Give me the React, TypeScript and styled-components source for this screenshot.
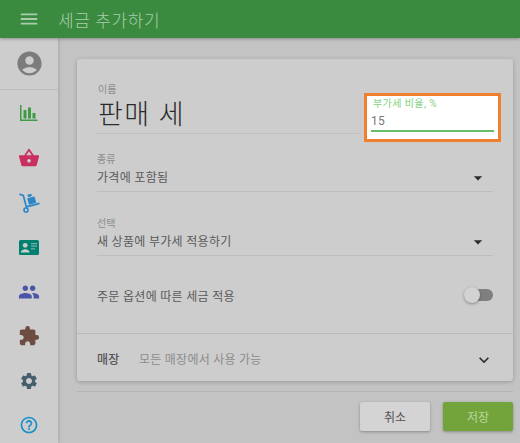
import React from "react";
import styled, { createGlobalStyle } from "styled-components";
import {
  MdMenu,
  MdAccountCircle,
  MdShoppingBasket,
  MdPeople,
  MdExtension,
  MdSettings,
  MdHelpOutline,
  MdExpandMore,
  MdArrowDropDown,
} from "react-icons/md";

const Global = createGlobalStyle`
  html, body { margin: 0; padding: 0; background: #c3c3c3; }
  * { box-sizing: border-box; }
  body { font-family: Roboto, "Noto Sans CJK KR", sans-serif; overflow: hidden; }
`;

const Page = styled.div`
  position: relative;
  width: 520px;
  height: 443px;
  overflow: hidden;
  display: flex;
  flex-direction: column;
  background: #c3c3c3;
`;

const Header = styled.header`
  height: 38px;
  flex: none;
  background: #3a8a40;
  display: flex;
  align-items: center;
  padding-left: 18px;
  gap: 18px;
  color: #a9cdab;
  box-shadow: 0 1px 3px rgba(0, 0, 0, 0.3);
  position: relative;
  z-index: 2;
`;

const Title = styled.h1`
  margin: 0;
  font-size: 17px;
  font-weight: 300;
  letter-spacing: 0.6px;
  color: #a9cdab;
`;

const Body = styled.div`
  flex: 1;
  display: flex;
  min-height: 0;
`;

const Sidebar = styled.nav`
  width: 58px;
  flex: none;
  background: #cdcdcd;
  box-shadow: 1px 0 3px rgba(0, 0, 0, 0.15);
  display: flex;
  flex-direction: column;
`;

const Profile = styled.div`
  height: 52px;
  flex: none;
  display: flex;
  align-items: center;
  justify-content: center;
  border-bottom: 1px solid #bcbcbc;
  color: #7c7c7c;
`;

const NavList = styled.div`
  display: flex;
  flex-direction: column;
  align-items: center;
  padding-top: 1px;
`;

const NavItem = styled.div<{ $color: string }>`
  height: 44.6px;
  flex: none;
  width: 100%;
  display: flex;
  align-items: center;
  justify-content: center;
  color: ${(p) => p.$color};
`;

const Main = styled.main`
  flex: 1;
  min-width: 0;
  padding: 21px 7px 0 19px;
  display: flex;
  flex-direction: column;
`;

const Card = styled.section`
  height: 322px;
  flex: none;
  background: #cdcdcd;
  border-radius: 3px;
  box-shadow: 0 1px 4px rgba(0, 0, 0, 0.22);
  display: flex;
  flex-direction: column;
`;

const Form = styled.div`
  flex: 1;
  padding: 0 20px;
  display: flex;
  flex-direction: column;
`;

const NameRow = styled.div`
  height: 75px;
  flex: none;
  padding-top: 25px;
  width: 263px;
  border-bottom: 1px solid #bfbfbf;
  margin-left: -1px;
  padding-left: 2px;
`;

const SmallLabel = styled.div`
  font-size: 10px;
  line-height: 12px;
  color: #8c8c8c;
`;

const NameValue = styled.div`
  font-size: 27px;
  font-weight: 300;
  line-height: 30px;
  letter-spacing: 1.5px;
  color: #2a2a2a;
  margin-top: 4px;
`;

const SelectField = styled.div<{ $top: number }>`
  margin-top: ${(p) => p.$top}px;
  height: 38px;
  flex: none;
  border-bottom: 1px solid #bdbdbd;
`;

const SelectValue = styled.div`
  font-size: 12px;
  line-height: 16px;
  margin-top: 2px;
  letter-spacing: 0.3px;
  color: #5a5a5a;
  display: flex;
  justify-content: space-between;
  align-items: center;
`;

const Caret = styled.span`
  display: flex;
  color: #2b2b2b;
  margin-right: 5px;
`;

const ToggleRow = styled.div`
  margin-top: 23px;
  height: 32px;
  display: flex;
  align-items: center;
  justify-content: space-between;
  font-size: 12px;
  letter-spacing: 0.3px;
  color: #5a5a5a;
`;

const Toggle = styled.div`
  width: 28px;
  height: 12px;
  border-radius: 6px;
  background: #7f7f7f;
  position: relative;
`;

const Knob = styled.div`
  position: absolute;
  left: -1px;
  top: -2px;
  width: 16px;
  height: 16px;
  border-radius: 50%;
  background: #d2d2d2;
  box-shadow: 0 1px 3px rgba(0, 0, 0, 0.35);
`;

const StoreRow = styled.div`
  height: 48px;
  flex: none;
  border-top: 1px solid #b9b9b9;
  padding: 2px 19px 0 20px;
  display: flex;
  align-items: center;
  font-size: 12px;
  letter-spacing: 0.25px;
`;

const StoreLabel = styled.span`
  color: #555;
  font-weight: 500;
  width: 42px;
  flex: none;
`;

const StoreValue = styled.span`
  color: #8c8c8c;
  flex: 1;
`;

const Chevron = styled.span`
  display: flex;
  color: #2b2b2b;
  margin-top: 2px;
`;

const Rule = styled.div`
  height: 1px;
  flex: none;
  margin-top: 10px;
  background: #b4b4b4;
`;

const Actions = styled.div`
  margin-top: 10px;
  display: flex;
  justify-content: flex-end;
  gap: 13px;
`;

const Button = styled.button<{ $primary?: boolean }>`
  width: 70px;
  height: 29px;
  border: 0;
  border-radius: 2px;
  padding: 0;
  font-family: inherit;
  font-size: 12px;
  background: ${(p) => (p.$primary ? "#73a43c" : "#d4d4d4")};
  color: ${(p) => (p.$primary ? "#bcd79d" : "#555")};
  box-shadow: 0 1px 3px rgba(0, 0, 0, 0.3);
`;

const Highlight = styled.div`
  position: absolute;
  left: 364px;
  top: 93px;
  width: 137px;
  height: 49px;
  background: #fff;
  border: 3px solid #f08030;
  padding: 2px 4px 0 4px;
`;

const HighlightLabel = styled.div`
  font-size: 10px;
  line-height: 12px;
  padding-left: 2px;
  letter-spacing: 0.4px;
  color: #84d184;
`;

const HighlightValue = styled.div`
  font-size: 12px;
  line-height: 14px;
  margin-top: 4px;
  height: 18px;
  color: #777;
  border-bottom: 2px solid #68bd68;
  letter-spacing: 0.3px;
`;

const BarsIcon = () => (
  <svg width="18" height="18" viewBox="0 0 18 18" fill="currentColor">
    <path d="M0 1h1.5v14.5H17.5V17H0z" />
    <path d="M3.5 6h3v8.5h-3zM8 3.5h3v11H8zM12.5 9h3v5.5h-3z" />
  </svg>
);

const DollyIcon = () => (
  <svg width="21" height="21" viewBox="0 0 24 24" fill="currentColor">
    <path d="M.5 1.5l5.2 1.6 3.3 12.7 14.2-3.7.5 1.9-16 4.2L4.1 4.7.5 3.6z" />
    <circle cx="8" cy="20.6" r="2.3" fill="none" stroke="currentColor" strokeWidth="1.8" />
    <path d="M9.4 7.2l8.2-2.2 2.2 7.4-8.4 2.2z" />
    <path d="M9.6 3.1l4.4-1.2 .8 2.8-4.4 1.2z" />
  </svg>
);

const ContactIcon = () => (
  <svg width="20" height="15" viewBox="0 0 20 15">
    <rect width="20" height="15" rx="1.5" fill="currentColor" />
    <circle cx="6.2" cy="5.3" r="2.4" fill="#cdcdcd" />
    <path d="M1.8 12.6c0-2.2 2.9-3.3 4.4-3.3s4.4 1.1 4.4 3.3z" fill="#cdcdcd" />
    <path d="M12 3h6v1.2h-6zM12 5.6h6v1.2h-6zM12 8.2h4v1.2h-4z" fill="#cdcdcd" opacity="0.6" />
  </svg>
);

const items = [
  { color: "#3f9c45", node: <BarsIcon /> },
  { color: "#c9305f", node: <MdShoppingBasket size={22} /> },
  { color: "#2a86c8", node: <DollyIcon /> },
  { color: "#00806e", node: <ContactIcon /> },
  { color: "#4a55a8", node: <MdPeople size={22} /> },
  { color: "#6d4c41", node: <MdExtension size={22} /> },
  { color: "#455f6d", node: <MdSettings size={20} /> },
  { color: "#1590cc", node: <MdHelpOutline size={20} /> },
];

export default function App() {
  return (
    <Page>
      <Global />
      <Header>
        <MdMenu size={22} />
        <Title>세금 추가하기</Title>
      </Header>
      <Body>
        <Sidebar>
          <Profile>
            <MdAccountCircle size={29} />
          </Profile>
          <NavList>
            {items.map((it, i) => (
              <NavItem key={i} $color={it.color}>
                {it.node}
              </NavItem>
            ))}
          </NavList>
        </Sidebar>
        <Main>
          <Card>
            <Form>
              <NameRow>
                <SmallLabel>이름</SmallLabel>
                <NameValue>판매 세</NameValue>
              </NameRow>
              <SelectField $top={20}>
                <SmallLabel>종류</SmallLabel>
                <SelectValue>
                  가격에 포함됨
                  <Caret>
                    <MdArrowDropDown size={20} />
                  </Caret>
                </SelectValue>
              </SelectField>
              <SelectField $top={26}>
                <SmallLabel>선택</SmallLabel>
                <SelectValue>
                  새 상품에 부가세 적용하기
                  <Caret>
                    <MdArrowDropDown size={20} />
                  </Caret>
                </SelectValue>
              </SelectField>
              <ToggleRow>
                주문 옵션에 따른 세금 적용
                <Toggle>
                  <Knob />
                </Toggle>
              </ToggleRow>
            </Form>
            <StoreRow>
              <StoreLabel>매장</StoreLabel>
              <StoreValue>모든 매장에서 사용 가능</StoreValue>
              <Chevron>
                <MdExpandMore size={20} />
              </Chevron>
            </StoreRow>
          </Card>
          <Rule />
          <Actions>
            <Button>취소</Button>
            <Button $primary>저장</Button>
          </Actions>
        </Main>
      </Body>
      <Highlight>
        <HighlightLabel>부가세 비율, %</HighlightLabel>
        <HighlightValue>15</HighlightValue>
      </Highlight>
    </Page>
  );
}
